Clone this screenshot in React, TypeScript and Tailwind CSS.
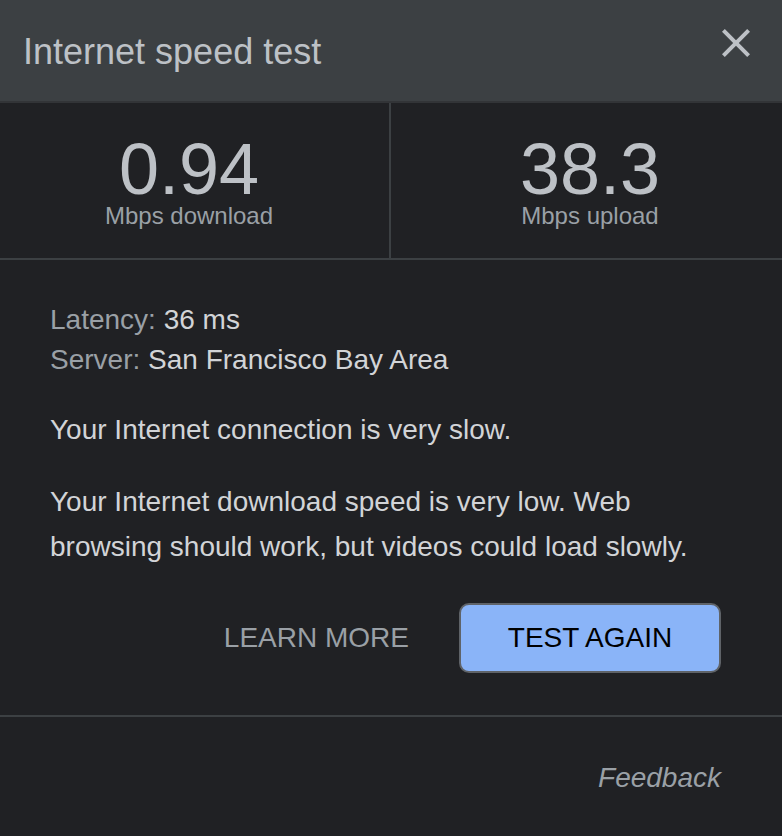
import React from "react";

export default function App() {
  const font = { fontFamily: '"Liberation Sans", Arial, Helvetica, sans-serif' };
  return (
    <div className="w-[782px] h-[836px] bg-[#202124] flex flex-col overflow-hidden" style={font}>
      {/* Header */}
      <div className="h-[101px] bg-[#3c4043] flex items-start justify-between pl-[23px] pr-[32px]">
        <div className="mt-[32px] text-[36px] leading-[40px] text-[#bdc1c6]">Internet speed test</div>
        <button className="mt-[29px] w-[28px] h-[28px] flex items-center justify-center">
          <svg width="28" height="28" viewBox="5 5 14 14" fill="#bdc1c6">
            <path d="M19 6.41L17.59 5 12 10.59 6.41 5 5 6.41 10.59 12 5 17.59 6.41 19 12 13.41 17.59 19 19 17.59 13.41 12z" />
          </svg>
        </button>
      </div>
      <div className="h-[2px] bg-[#323437]" />

      {/* Metrics */}
      <div className="flex h-[155px]">
        <div className="w-[389px] flex flex-col items-center pt-[31px] pr-[11px]">
          <div className="text-[72px] leading-[70px] text-[#bdc1c6]">0.94</div>
          <div className="text-[24px] leading-[24px] text-[#9aa0a6]">Mbps download</div>
        </div>
        <div className="w-[2px] bg-[#3c4043]" />
        <div className="flex-1 flex flex-col items-center pt-[31px] pl-[7px]">
          <div className="text-[72px] leading-[70px] text-[#bdc1c6]">38.3</div>
          <div className="text-[24px] leading-[24px] text-[#9aa0a6]">Mbps upload</div>
        </div>
      </div>
      <div className="h-[2px] bg-[#3c4043]" />

      {/* Body */}
      <div className="pl-[50px] pr-[61px] pt-[40px] text-[28px] text-[#d2d4d7]">
        <div className="leading-[40px]">
          <span className="text-[#9aa0a6]">Latency: </span>36 ms
        </div>
        <div className="leading-[40px]">
          <span className="text-[#9aa0a6]">Server: </span>San Francisco Bay Area
        </div>
        <p className="mt-[27px] leading-[45px]">Your Internet connection is very slow.</p>
        <p className="mt-[27px] leading-[45px]">
          Your Internet download speed is very low. Web browsing should work, but videos could load slowly.
        </p>
        <div className="mt-[34px] flex items-center justify-end gap-[50px]">
          <button className="text-[28px] leading-[40px] text-[#9aa0a6]">LEARN MORE</button>
          <button className="w-[262px] h-[70px] rounded-[10px] border-2 border-[#5f6368] bg-[#8ab4f8] text-black text-[28px] leading-[40px] flex items-center justify-center">
            TEST AGAIN
          </button>
        </div>
      </div>
      <div className="mt-[42px] h-[2px] bg-[#3c4043]" />
      <div className="pr-[61px] pt-[41px] flex justify-end">
        <span className="italic text-[28px] leading-[40px] text-[#9aa0a6]">Feedback</span>
      </div>
    </div>
  );
}
